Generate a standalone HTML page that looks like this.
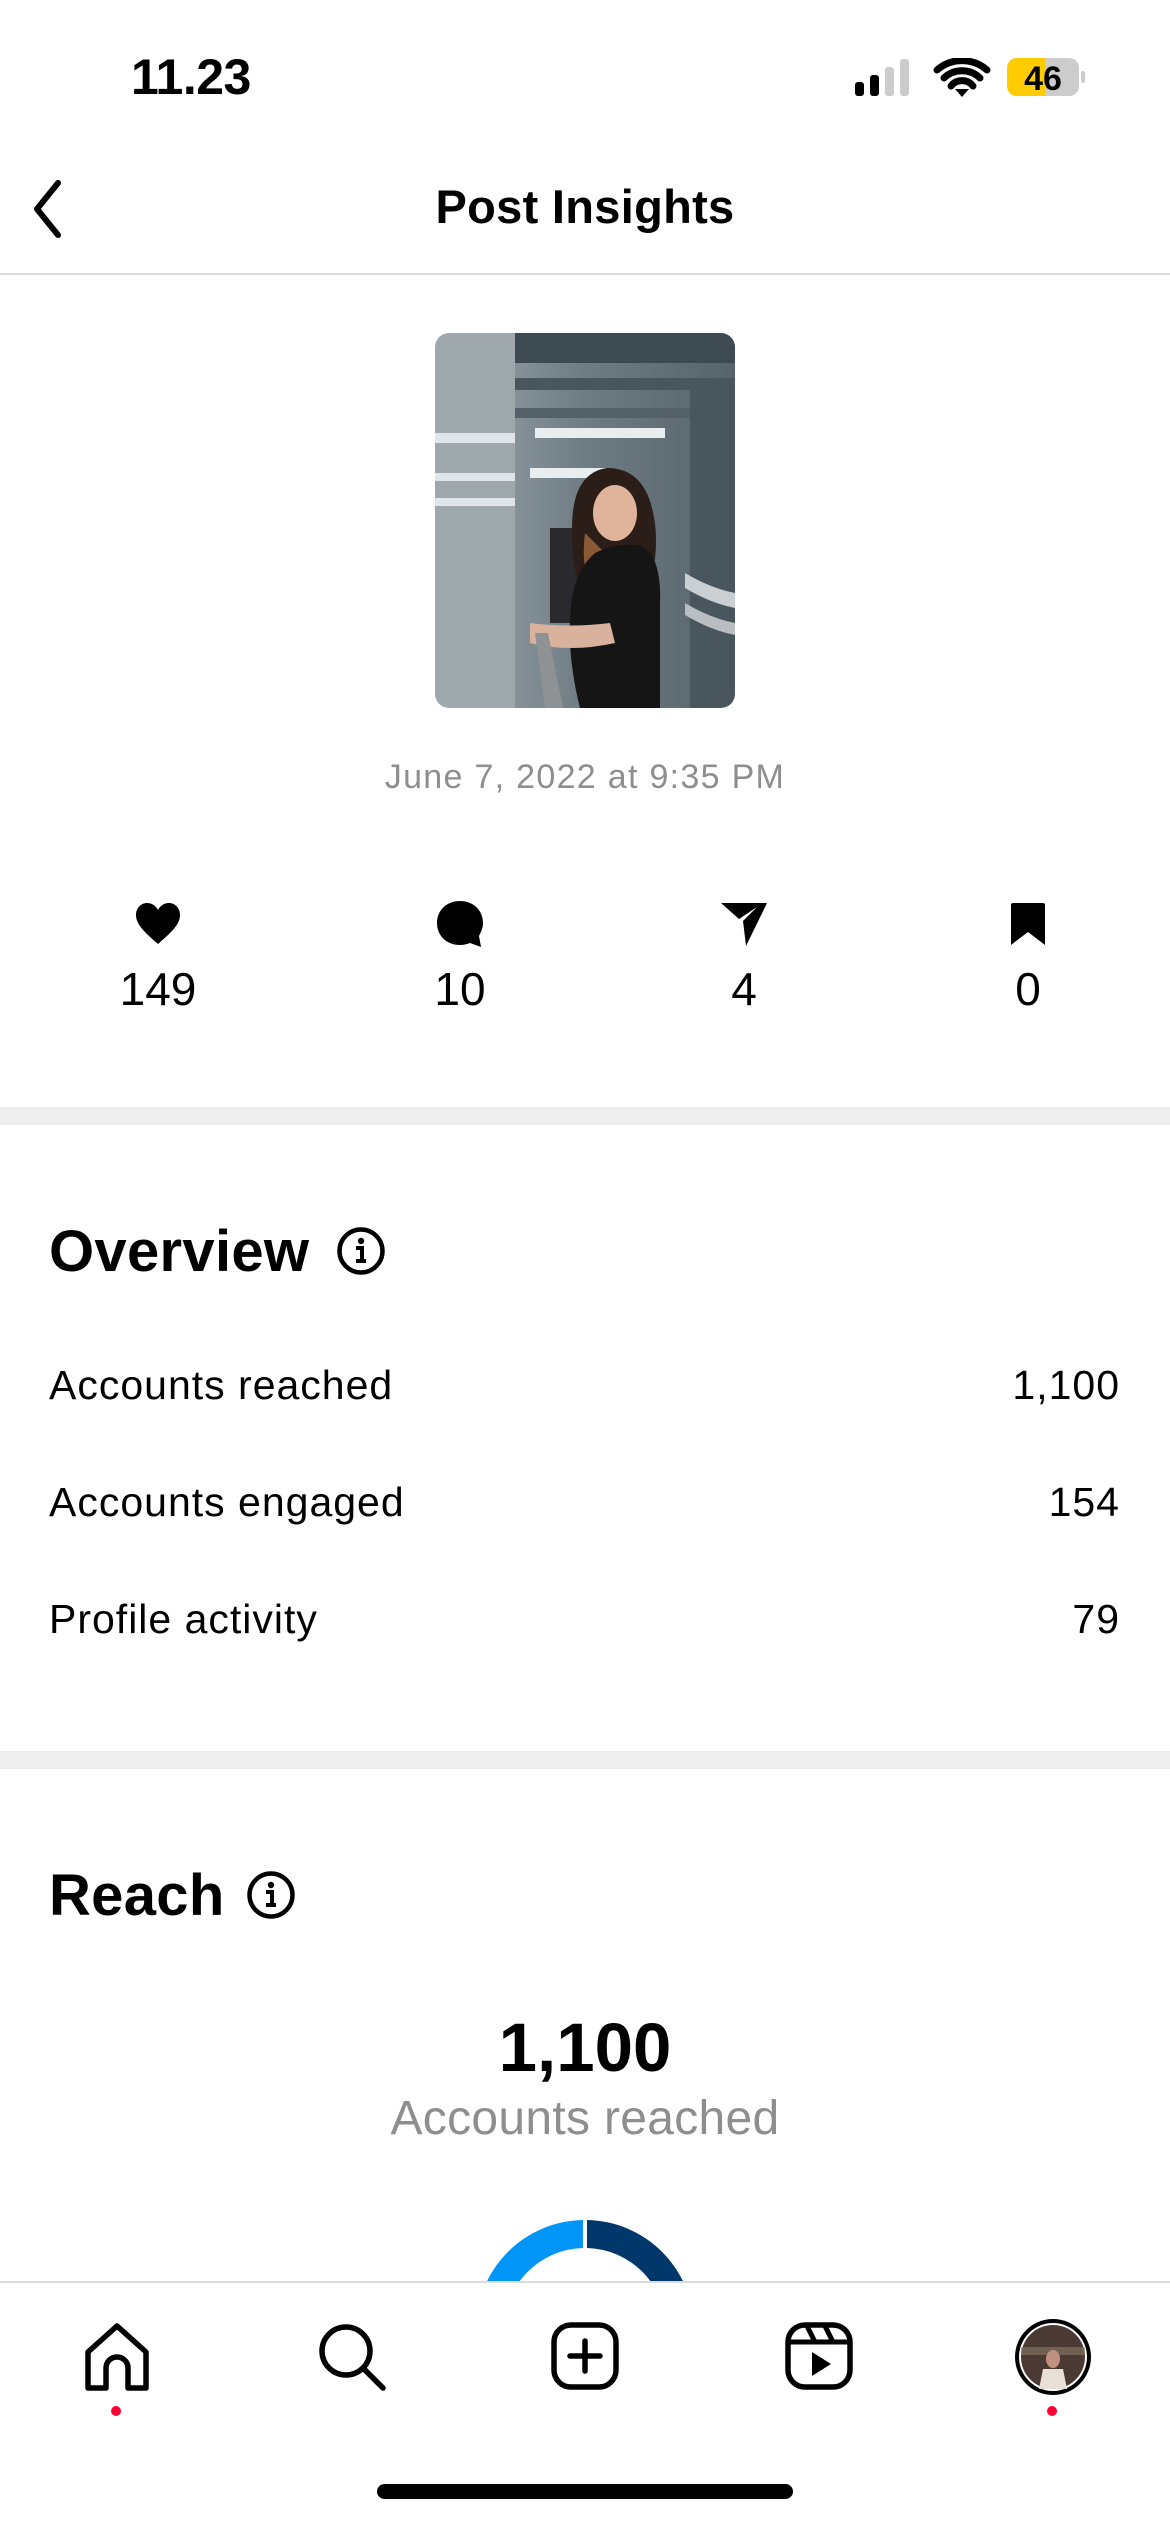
<!DOCTYPE html>
<html><head><meta charset="utf-8"><style>
*{margin:0;padding:0;box-sizing:border-box}
body{width:1170px;height:2532px;background:#fff;font-family:"Liberation Sans",sans-serif;color:#000;position:relative;overflow:hidden}
.a{position:absolute}
.t{white-space:nowrap}
.r{font-size:41px;letter-spacing:1px}
</style></head><body>
<div class="a t" style="left:131px;top:48px;font-size:50px;font-weight:bold;letter-spacing:-0.5px">11.23</div>
<svg class="a" style="left:855px;top:58px" width="240" height="40" viewBox="0 0 240 40">
<rect x="0" y="24" width="9" height="14" rx="3"/><rect x="15" y="17" width="9" height="21" rx="3"/>
<rect x="30" y="9" width="9" height="29" rx="3" fill="#ccc"/><rect x="45" y="1" width="9" height="37" rx="3" fill="#ccc"/>
<path d="M82 12a38 38 0 0 1 50 0M89 20a26 26 0 0 1 36 0M96 28a14 14 0 0 1 22 0" stroke="#000" stroke-width="7" fill="none" stroke-linecap="round"/><path d="M100 31l7 8 7-8z"/>
<rect x="152" y="0" width="72" height="38" rx="10" fill="#ccc"/><path d="M162 0h28v38h-28a10 10 0 0 1-10-10v-18a10 10 0 0 1 10-10z" fill="#ffcc00"/>
<rect x="226" y="13" width="4" height="12" rx="2" fill="#ccc"/>
<text x="188" y="32" font-size="34" font-weight="bold" text-anchor="middle" font-family="Liberation Sans">46</text>
</svg>
<svg class="a" style="left:24px;top:178px" width="44" height="62" viewBox="0 0 44 62"><path d="M34 5L13 31l21 26" stroke="#000" stroke-width="6" fill="none" stroke-linecap="round" stroke-linejoin="round"/></svg>
<div class="a t" style="left:0;width:1170px;text-align:center;top:179px;font-size:47px;font-weight:bold;letter-spacing:0.3px">Post Insights</div>
<div class="a" style="left:0;top:273px;width:1170px;height:2px;background:#dbdbdb"></div>

<svg class="a" style="left:435px;top:333px;border-radius:14px" width="300" height="375" viewBox="0 0 300 375">
<defs><linearGradient id="bg" x1="0" y1="0" x2="1" y2="0"><stop offset="0" stop-color="#a9b3b8"/><stop offset=".2" stop-color="#8c979d"/><stop offset=".5" stop-color="#6f7c84"/><stop offset="1" stop-color="#56636b"/></linearGradient>
<clipPath id="c"><rect width="300" height="375" rx="14"/></clipPath></defs>
<g clip-path="url(#c)">
<rect width="300" height="375" fill="url(#bg)"/>
<rect x="0" y="0" width="80" height="375" fill="#9ea8ad"/>
<rect x="80" y="0" width="220" height="30" fill="#3e4a52"/>
<rect x="80" y="45" width="220" height="12" fill="#4a565e"/>
<rect x="80" y="75" width="220" height="10" fill="#55616a"/>
<rect x="100" y="95" width="130" height="10" fill="#e8eef0"/>
<rect x="0" y="100" width="80" height="10" fill="#dfe5e8"/>
<rect x="95" y="135" width="80" height="10" fill="#e8eef0"/>
<rect x="0" y="140" width="80" height="8" fill="#dfe5e8"/>
<rect x="0" y="165" width="80" height="8" fill="#dfe5e8"/>
<rect x="255" y="50" width="45" height="325" fill="#4a565e"/>
<path d="M250 240q25 15 50 20v15q-25-5-50-20z" fill="#c9cfd2"/>
<path d="M250 270q25 15 50 20v12q-25-5-50-20z" fill="#b8bec1"/>
<rect x="115" y="195" width="30" height="95" fill="#2a2a2e"/>
<path d="M172 135q-35 5-35 60q0 50 10 60l70-10q8-40 0-70q-10-40-45-40z" fill="#2b1d17"/>
<path d="M150 200q-5 40 10 60l30-20z" fill="#8a5a35"/>
<ellipse cx="180" cy="180" rx="22" ry="28" fill="#e0b49b"/>
<path d="M160 220q20-10 45-8q22 10 20 60v103h-80q-15-60-8-110q5-30 23-45z" fill="#151516"/>
<path d="M95 290q40 5 80 0l5 20q-45 10-85 0z" fill="#d9b29d"/>
<path d="M100 300l10 75h18l-15-75z" fill="#8e9294"/>
</g></svg>
<div class="a t" style="left:0;width:1170px;text-align:center;top:758px;font-size:34px;letter-spacing:1.3px;color:#8e8e8e">June 7, 2022 at 9:35 PM</div>

<svg class="a" style="left:134px;top:902px" width="48" height="44" viewBox="0 0 48 44"><path d="M24 42C10 30 2 22 2 13 2 6 7 1 13 1c5 0 9 3 11 7 2-4 6-7 11-7 6 0 11 5 11 12 0 9-8 17-22 29z"/></svg>
<svg class="a" style="left:435px;top:900px" width="50" height="48" viewBox="0 0 50 48"><path d="M25 1C12 1 2 10 2 23s10 22 23 22c4 0 7-1 10-2l11 4-2-11c2-4 4-8 4-13C48 10 38 1 25 1z"/></svg>
<svg class="a" style="left:719px;top:901px" width="50" height="46" viewBox="0 0 50 46"><path d="M2 2h46L27 45 24 20 38 6 20 18z"/></svg>
<svg class="a" style="left:1010px;top:903px" width="36" height="42" viewBox="0 0 36 42"><path d="M1 2a2 2 0 0 1 2-2h30a2 2 0 0 1 2 2v40L18 29 1 42z"/></svg>
<div class="a t" style="left:58px;width:200px;text-align:center;top:962px;font-size:46px">149</div>
<div class="a t" style="left:360px;width:200px;text-align:center;top:962px;font-size:46px">10</div>
<div class="a t" style="left:644px;width:200px;text-align:center;top:962px;font-size:46px">4</div>
<div class="a t" style="left:928px;width:200px;text-align:center;top:962px;font-size:46px">0</div>

<div class="a" style="left:0;top:1107px;width:1170px;height:18px;background:#efefef"></div>
<div class="a t" style="left:49px;top:1218px;font-size:58px;font-weight:bold;letter-spacing:0.3px">Overview</div>
<svg class="a" style="left:336px;top:1226px" width="50" height="50" viewBox="0 0 50 50"><circle cx="25" cy="25" r="21.5" stroke="#000" stroke-width="4.5" fill="none"/><circle cx="25" cy="15" r="3.2"/><path d="M20 22h6v12M20 35h10" stroke="#000" stroke-width="4" fill="none"/></svg>
<div class="a t r" style="left:49px;top:1362px">Accounts reached</div>
<div class="a t r" style="right:50px;top:1362px">1,100</div>
<div class="a t r" style="left:49px;top:1479px">Accounts engaged</div>
<div class="a t r" style="right:50px;top:1479px">154</div>
<div class="a t r" style="left:49px;top:1596px">Profile activity</div>
<div class="a t r" style="right:50px;top:1596px">79</div>

<div class="a" style="left:0;top:1751px;width:1170px;height:18px;background:#efefef"></div>
<div class="a t" style="left:49px;top:1862px;font-size:58px;font-weight:bold;letter-spacing:0.3px">Reach</div>
<svg class="a" style="left:246px;top:1870px" width="50" height="50" viewBox="0 0 50 50"><circle cx="25" cy="25" r="21.5" stroke="#000" stroke-width="4.5" fill="none"/><circle cx="25" cy="15" r="3.2"/><path d="M20 22h6v12M20 35h10" stroke="#000" stroke-width="4" fill="none"/></svg>
<div class="a t" style="left:0;width:1170px;text-align:center;top:2008px;font-size:69px;font-weight:bold">1,100</div>
<div class="a t" style="left:0;width:1170px;text-align:center;top:2091px;font-size:48px;letter-spacing:0.3px;color:#8e8e8e">Accounts reached</div>
<svg class="a" style="left:476px;top:2218px" width="220" height="64" viewBox="0 0 220 64">
<path d="M107 2A109 109 0 0 0 0 111h28A81 81 0 0 1 107 30z" fill="#0095f6"/>
<path d="M111 2A109 109 0 0 1 218 111h-28A81 81 0 0 0 111 30z" fill="#00376b"/>
</svg>
<div class="a" style="left:0;top:2281px;width:1170px;height:251px;background:#fff;border-top:2px solid #dbdbdb"></div>

<svg class="a" style="left:84px;top:2322px" width="66" height="70" viewBox="0 0 66 70"><path d="M4 66V30L33 4l29 26v36H44V46a11 11 0 0 0-22 0v20z" stroke="#000" stroke-width="5.5" fill="none" stroke-linejoin="round"/></svg>
<svg class="a" style="left:316px;top:2321px" width="72" height="72" viewBox="0 0 72 72"><circle cx="30" cy="30" r="24" stroke="#000" stroke-width="5.5" fill="none"/><path d="M48 48l19 19" stroke="#000" stroke-width="5.5" stroke-linecap="round"/></svg>
<svg class="a" style="left:551px;top:2322px" width="68" height="68" viewBox="0 0 68 68"><rect x="3" y="3" width="62" height="62" rx="17" stroke="#000" stroke-width="5.5" fill="none"/><path d="M34 19v30M19 34h30" stroke="#000" stroke-width="5.5" stroke-linecap="round"/></svg>
<svg class="a" style="left:785px;top:2322px" width="68" height="68" viewBox="0 0 68 68"><rect x="3" y="3" width="62" height="62" rx="17" stroke="#000" stroke-width="5.5" fill="none"/><path d="M4 20h60M22 4l8 16M40 4l8 16" stroke="#000" stroke-width="5" fill="none"/><path d="M27 30v24l19-12z"/></svg>
<svg class="a" style="left:1013px;top:2317px" width="80" height="80" viewBox="0 0 80 80"><circle cx="40" cy="40" r="38" fill="#000"/><circle cx="40" cy="40" r="34" fill="#fff"/><circle cx="40" cy="40" r="32" fill="#4a3a33"/><path d="M8 30h64v8H8z" fill="#8a7a6a" opacity=".6"/><ellipse cx="40" cy="42" rx="7" ry="9" fill="#c09080"/><path d="M30 52h20l4 20H26z" fill="#e8e0d8"/></svg>
<div class="a" style="left:111px;top:2406px;width:10px;height:10px;border-radius:50%;background:#ff0033"></div>
<div class="a" style="left:1047px;top:2406px;width:10px;height:10px;border-radius:50%;background:#ff0033"></div>
<div class="a" style="left:377px;top:2484px;width:416px;height:15px;border-radius:8px;background:#000"></div>
</body></html>
